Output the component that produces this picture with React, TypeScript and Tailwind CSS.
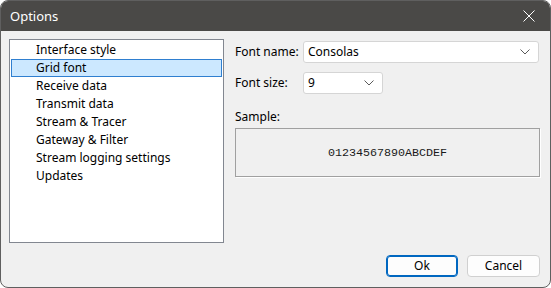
import React from "react";

const items = [
  "Interface style",
  "Grid font",
  "Receive data",
  "Transmit data",
  "Stream & Tracer",
  "Gateway & Filter",
  "Stream logging settings",
  "Updates",
];

function Chevron() {
  return (
    <svg width="10" height="6" viewBox="0 0 10 6" fill="none">
      <path d="M0.5 0.5 L5 5 L9.5 0.5" stroke="#5a5a5a" strokeWidth="1" />
    </svg>
  );
}

export default function App() {
  return (
    <div
      className="w-[551px] h-[288px] bg-white overflow-hidden text-[12px] text-[#000]"
      style={{ fontFamily: '"Noto Sans", "Open Sans", sans-serif' }}
    >
      <div className="w-[551px] h-[288px] rounded-[8px] border border-[#5f5f5f] bg-[#f0f0f0] flex flex-col overflow-hidden">
        <div className="h-[30px] shrink-0 bg-[#4a4947] flex items-center justify-between pl-[9px] pr-[15px]">
          <span className="text-white text-[13px] leading-none">Options</span>
          <svg width="12" height="12" viewBox="0 0 12 12">
            <path d="M0.5 0.5 L11.5 11.5 M11.5 0.5 L0.5 11.5" stroke="#ffffff" strokeWidth="1" />
          </svg>
        </div>
        <div className="flex flex-1 pt-[8px] pl-[8px] pr-[10px]">
          <div className="w-[217px] h-[204px] bg-white border border-[#828790] pt-[1px] px-[1px] flex flex-col">
            {items.map((it, i) => (
              <div
                key={it}
                className={
                  "h-[18px] flex items-center pl-[24px] border " +
                  (i === 1 ? "bg-[#cce8ff] border-[#2f7fd0]" : "border-transparent")
                }
              >
                <span className="leading-none">{it}</span>
              </div>
            ))}
          </div>
          <div className="flex-1 pl-[11px] pt-[2px] flex flex-col">
            <div className="flex items-center h-[22px]">
              <span className="w-[68px]">Font name:</span>
              <div className="w-[236px] h-[22px] bg-white border border-[#d5d5d5] rounded-[3px] flex items-center justify-between pl-[4px] pr-[8px]">
                <span>Consolas</span>
                <Chevron />
              </div>
            </div>
            <div className="flex items-center h-[22px] mt-[9px]">
              <span className="w-[68px]">Font size:</span>
              <div className="w-[80px] h-[22px] bg-white border border-[#d5d5d5] rounded-[3px] flex items-center justify-between pl-[4px] pr-[8px]">
                <span>9</span>
                <Chevron />
              </div>
            </div>
            <div className="mt-[17px] leading-none">Sample:</div>
            <div className="mt-[5px] w-[305px] h-[49px] border border-[#a0a0a0] shadow-[1px_1px_0_#ffffff] flex items-center justify-center">
              <span
                className="text-[11.7px] text-[#1a1a1a] pt-[2px]"
                style={{ fontFamily: '"Liberation Mono", "DejaVu Sans Mono", monospace' }}
              >
                01234567890ABCDEF
              </span>
            </div>
          </div>
        </div>
        <div className="flex justify-end gap-[9px] pr-[10px] pb-[10px]">
          <button className="w-[72px] h-[22px] bg-[#fdfdfd] border border-[#0067c0] rounded-[4px] flex items-center justify-center shadow-[inset_0_0_0_1px_#0067c0]">
            Ok
          </button>
          <button className="w-[73px] h-[22px] bg-[#fdfdfd] border border-[#d0d0d0] rounded-[4px] flex items-center justify-center">
            Cancel
          </button>
        </div>
      </div>
    </div>
  );
}
